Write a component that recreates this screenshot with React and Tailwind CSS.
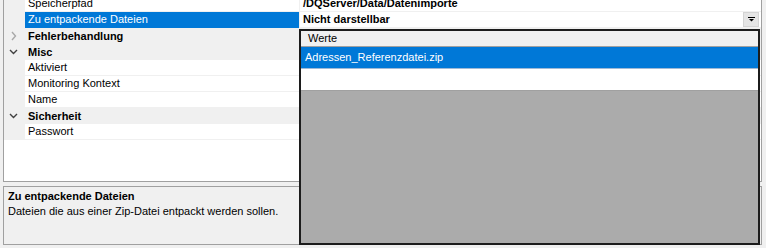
import { Fragment } from "react"

// Eigenschaften-Raster (WinForms PropertyGrid) mit aufgeklapptem Werte-Dropdown
const rows = [
  { type: "prop", name: "Speicherpfad", value: "/DQServer/Data/Datenimporte" },
  { type: "prop", name: "Zu entpackende Dateien", value: "Nicht darstellbar", selected: true },
  { type: "cat", name: "Fehlerbehandlung", open: false },
  { type: "cat", name: "Misc", open: true },
  { type: "prop", name: "Aktiviert" },
  { type: "prop", name: "Monitoring Kontext" },
  { type: "prop", name: "Name" },
  { type: "cat", name: "Sicherheit", open: true },
  { type: "prop", name: "Passwort" },
]

function Chevron({ open }) {
  if (open)
    return (
      <svg width="9" height="6" viewBox="0 0 9 6" className="ml-[9px]">
        <polyline points="1,1 4.5,4.5 8,1" fill="none" stroke="#404040" strokeWidth="1.4" />
      </svg>
    )
  return (
    <svg width="6" height="10" viewBox="0 0 6 10" className="ml-[11px]">
      <polyline points="1,1 4.5,5 1,9" fill="none" stroke="#a8a8a8" strokeWidth="1.4" />
    </svg>
  )
}

function Row({ row }) {
  if (row.type === "cat")
    return (
      <div className="flex h-[16px] items-center bg-[#f0f0f0]">
        <div className="flex w-[25px] items-center">
          <Chevron open={row.open} />
        </div>
        <span className="pl-[3px] font-bold leading-[16px]">{row.name}</span>
      </div>
    )

  return (
    <div className="flex h-[16px]">
      <div className="w-[25px] bg-[#f0f0f0]" />
      <div
        className={`w-[274px] pl-[3px] leading-[15px] whitespace-nowrap border-b ${
          row.selected ? "bg-[#0078d7] text-white border-[#0078d7]" : "bg-white border-[#f0f0f0]"
        }`}
      >
        {row.name}
      </div>
      <div className="w-px bg-[#f0f0f0]" />
      <div className="flex flex-1 items-start justify-between border-b border-[#f0f0f0] bg-white pl-[3px]">
        <span className="font-bold leading-[15px]">{row.value}</span>
        {row.selected && (
          <div className="mr-[2px] flex h-[15px] w-[16px] items-center justify-center border border-[#d4d4d4] bg-[#e5e5e5]">
            <svg width="7" height="5" viewBox="0 0 7 5">
              <rect x="0" y="0" width="7" height="1" fill="#000" />
              <polygon points="1,2 6,2 3.5,4.5" fill="#000" />
            </svg>
          </div>
        )}
      </div>
    </div>
  )
}

export default function App() {
  return (
    <div className="relative h-[248px] w-[766px] overflow-hidden bg-[#f0f0f0] pl-[3px] pr-[4px] font-['Liberation_Sans',Arial,sans-serif] text-[11px] text-black">
      {/* RASTER */}
      <div className="h-[182px] overflow-hidden border-x border-b border-[#a0a0a0] bg-white">
        <div className="-mt-[4px] -ml-[4px]">
          {rows.map((r, i) => (
            <Fragment key={i}>
              <Row row={r} />
            </Fragment>
          ))}
        </div>
      </div>

      {/* BESCHREIBUNG */}
      <div className="mt-[4px] h-[59px] border border-[#a0a0a0] bg-[#f0f0f0] px-[4px] pt-[2px] leading-[15px]">
        <div className="font-bold">Zu entpackende Dateien</div>
        <div>Dateien die aus einer Zip-Datei entpackt werden sollen.</div>
      </div>

      {/* DROPDOWN MIT WERTEN */}
      <div className="absolute left-[299px] top-[29px] h-[216px] w-[461px] border-2 border-[#1c1c1c] bg-[#ababab]">
        <div className="h-[16px] border-b border-[#a0a0a0] bg-[#f0f0f0] pl-[7px] leading-[15px]">Werte</div>
        <div className="flex h-[22px] items-center border-b border-[#9fb9d6] bg-[#0078d7] pl-[4px] text-white">
          Adressen_Referenzdatei.zip
        </div>
        <div className="h-[22px] border-b border-[#a0a0a0] bg-white" />
      </div>
    </div>
  )
}
